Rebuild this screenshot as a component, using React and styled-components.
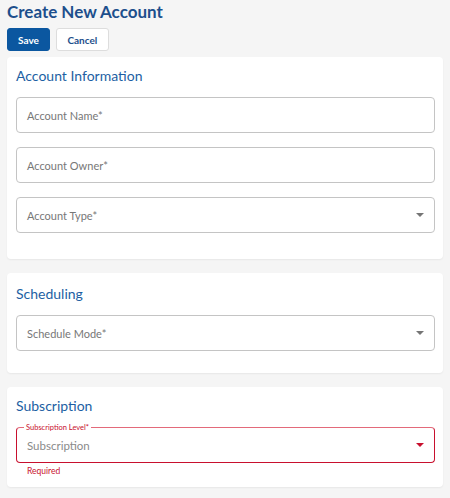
import React from 'react'
import styled, { createGlobalStyle } from 'styled-components'

const GlobalStyle = createGlobalStyle`
  html, body {
    margin: 0;
    padding: 0;
    background: #f5f5f5;
    font-family: "Lato", "Liberation Sans", sans-serif;
  }
`

const Page = styled.div`
  padding: 2px 7px 10px 7px;
  display: flex;
  flex-direction: column;
`

const Title = styled.h1`
  margin: 0;
  font-size: 17px;
  font-weight: 700;
  color: #1d4f8c;
  line-height: 20px;
`

const Toolbar = styled.div`
  display: flex;
  gap: 6px;
  margin-top: 6px;
`

const Button = styled.button`
  height: 23px;
  padding: 0 10px;
  border-radius: 3px;
  font-family: inherit;
  font-size: 10px;
  font-weight: 700;
  cursor: pointer;
  background: ${(p) => (p.primary ? '#0b57a0' : '#ffffff')};
  color: ${(p) => (p.primary ? '#ffffff' : '#1d4f8c')};
  border: 1px solid ${(p) => (p.primary ? '#0b57a0' : '#dddddd')};
  min-width: ${(p) => (p.primary ? '42px' : '53px')};
`

const Card = styled.section`
  background: #ffffff;
  border-radius: 4px;
  box-shadow: 0 1px 2px rgba(0, 0, 0, 0.06);
  padding: ${(p) => p.pad || '11px'} 8px ${(p) => p.bottom || '24px'} 9px;
  margin-top: ${(p) => p.top || '14px'};
  display: flex;
  flex-direction: column;
  gap: 14px;
`

const CardTitle = styled.h2`
  margin: 0 0 -1px 0;
  font-size: 14px;
  font-weight: 400;
  color: #1d5fa3;
  line-height: 17px;
`

const Field = styled.div`
  position: relative;
  height: 36px;
  box-sizing: border-box;
  border: 1px solid ${(p) => (p.error ? '#c8102e' : '#c4c4c4')};
  ${(p) => p.error && 'border-top-color: #e36a7a;'}
  border-radius: 4px;
  display: flex;
  align-items: center;
  padding: 0 10px;
`

const Placeholder = styled.span`
  font-size: 11px;
  color: #777777;
`

const Value = styled.span`
  font-size: 11.5px;
  color: #8a8a8a;
`

const Arrow = styled.span`
  position: absolute;
  right: 10px;
  top: 50%;
  margin-top: -2px;
  width: 0;
  height: 0;
  border-left: 4px solid transparent;
  border-right: 4px solid transparent;
  border-top: 4px solid ${(p) => (p.error ? '#c8102e' : '#757575')};
`

const FloatLabel = styled.span`
  position: absolute;
  left: 7px;
  top: -5px;
  padding: 0 2px;
  background: #ffffff;
  font-size: 7.5px;
  line-height: 9px;
  color: #c8102e;
`

const ErrorGroup = styled.div`
  display: flex;
  flex-direction: column;
`

const Helper = styled.span`
  font-size: 8.5px;
  color: #c8102e;
  margin: 3px 0 0 11px;
  line-height: 10px;
`

const SelectField = ({ label }) => (
  <Field>
    <Placeholder>{label}</Placeholder>
    <Arrow />
  </Field>
)

const App = () => {
  return (
    <>
      <GlobalStyle />
      <Page>
        <Title>Create New Account</Title>
        <Toolbar>
          <Button primary>Save</Button>
          <Button>Cancel</Button>
        </Toolbar>

        <Card top="6px" pad="10px" bottom="26px">
          <CardTitle>Account Information</CardTitle>
          <Field>
            <Placeholder>Account Name*</Placeholder>
          </Field>
          <Field>
            <Placeholder>Account Owner*</Placeholder>
          </Field>
          <SelectField label="Account Type*" />
        </Card>

        <Card pad="12px" bottom="22px">
          <CardTitle>Scheduling</CardTitle>
          <SelectField label="Schedule Mode*" />
        </Card>

        <Card pad="10px" bottom="11px">
          <CardTitle>Subscription</CardTitle>
          <ErrorGroup>
            <Field error>
              <FloatLabel>Subscription Level*</FloatLabel>
              <Value>Subscription</Value>
              <Arrow error />
            </Field>
            <Helper>Required</Helper>
          </ErrorGroup>
        </Card>
      </Page>
    </>
  )
}

export default App
